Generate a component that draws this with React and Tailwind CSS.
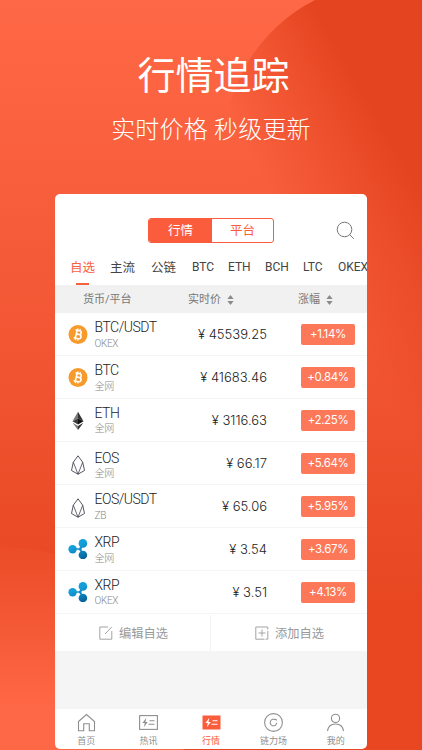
import React from "react";

const coins = [
  { icon: "btc", name: "BTC/USDT", place: "OKEX", price: "45539.25", change: "+1.14%" },
  { icon: "btc", name: "BTC", place: "全网", price: "41683.46", change: "+0.84%" },
  { icon: "eth", name: "ETH", place: "全网", price: "3116.63", change: "+2.25%", tight: true },
  { icon: "eos", name: "EOS", place: "全网", price: "66.17", change: "+5.64%", tight: true, low: true },
  { icon: "eos", name: "EOS/USDT", place: "ZB", price: "65.06", change: "+5.95%" },
  { icon: "xrp", name: "XRP", place: "全网", price: "3.54", change: "+3.67%" },
  { icon: "xrp", name: "XRP", place: "OKEX", price: "3.51", change: "+4.13%", tight: true },
];

const App = () => {
  return (
    <div className="relative flex h-[750px] w-[422px] flex-col items-center overflow-hidden bg-linear-to-b from-[#ff6846] from-0% to-[#e84722] to-80% font-[Roboto,'Noto_Sans_CJK_SC',sans-serif]">
      <Backdrop />

      {/* Headline */}
      <div className="relative h-[194px] w-full text-center text-white">
        <h1 className="mt-[49px] pl-[5px] text-[38px] leading-[54px] font-normal">
          行情追踪
        </h1>
        <p className="mt-3 text-[24px] leading-[30px] font-light tracking-[0.2px]">
          实时价格 秒级更新
        </p>
      </div>

      {/* Phone screen */}
      <div className="relative flex h-[555px] w-[312px] shrink-0 flex-col overflow-hidden rounded-[5px] bg-white">
        <div className="flex h-[55px] shrink-0 items-end">
          <div className="mb-[6px] ml-[93px] flex h-[25px] w-[126px] overflow-hidden rounded-[3px] border border-[#fb5c3b] text-[12.5px] leading-[24px]">
            <span className="w-[63px] bg-[#fb5c3b] text-center text-white">
              行情
            </span>
            <span className="flex-1 text-center text-[#fb5c3b]">平台</span>
          </div>
          <SearchIcon />
        </div>

        <div className="flex h-[36px] shrink-0 pl-[15px] text-[12.5px] leading-[37px] whitespace-nowrap text-[#444]">
          <div className="relative w-10 shrink-0 text-[#f8613f]">
            自选
            <span className="absolute bottom-0 left-[6px] h-[2px] w-[13px] bg-[#f8613f]" />
          </div>
          <span className="w-[41px] shrink-0">主流</span>
          <span className="w-[41px] shrink-0">公链</span>
          <span className="w-[36px] shrink-0 text-[12px]">BTC</span>
          <span className="w-[37px] shrink-0 text-[12px]">ETH</span>
          <span className="w-[38px] shrink-0 text-[12px]">BCH</span>
          <span className="w-[35px] shrink-0 text-[12px]">LTC</span>
          <span className="shrink-0 text-[12px]">OKEX</span>
        </div>

        <div className="flex h-7 shrink-0 items-center bg-[#f1f1f1] pt-[2px] text-[11px] text-[#777]">
          <span className="w-[106px] pl-7">货币/平台</span>
          <span className="flex w-[110px] items-center gap-[6px] pl-[27px]">
            实时价 <SortIcon />
          </span>
          <span className="flex items-center gap-[6px] pl-[27px]">
            涨幅 <SortIcon />
          </span>
        </div>

        {coins.map((coin, i) => (
          <CoinRow key={i} coin={coin} />
        ))}

        <div className="flex h-[37px] shrink-0 pt-px text-[12.25px] text-[#999]">
          <div className="flex w-[156px] items-center gap-[6px] border-r border-[#f3f3f3] pl-[44px]">
            <EditIcon />
            <span className="mt-[2px]">编辑自选</span>
          </div>
          <div className="flex flex-1 items-center gap-[6px] pl-[44px]">
            <AddIcon />
            <span className="mt-[2px]">添加自选</span>
          </div>
        </div>

        <div className="flex-1 bg-[#f5f5f5]" />

        <div className="flex h-[40px] shrink-0 text-[#8f8f8f]">
          <Tab label="首页">
            <path d="M1.500 8.500 9.500 1.500l8 7v9.300h-5.200v-7H6.700v7H1.500z" />
          </Tab>
          <Tab label="热讯">
            <rect x="0.6" y="2.6" width="17.8" height="13.8" />
            <path d="M10.5 7.8h5M9.5 11.3h6" />
            <path d="M7.4 4.800 3.400 10h2.400l-1 4.200L8.800 9H6.400z" fill="currentColor" stroke="none" />
          </Tab>
          <Tab label="行情" active>
            <rect x="0.5" y="2.5" width="18" height="14" fill="#fb5c3b" stroke="none" />
            <path d="M10.5 7.8h5M9.5 11.3h6" stroke="#fff" />
            <path d="M7.4 4.800 3.400 10h2.400l-1 4.200L8.800 9H6.400z" fill="#fff" stroke="none" />
          </Tab>
          <Tab label="链力场">
            <circle cx="9.5" cy="9.5" r="8.9" />
            <path d="M11.4 6.800a3.300 3.300 0 1 0 1.400 3M11.200 5.800l1.600 1.600" />
          </Tab>
          <Tab label="我的">
            <circle cx="9.5" cy="5.4" r="4.1" />
            <path d="M1.500 18c.6-4.500 4-7 8-7s7.400 2.500 8 7" />
          </Tab>
        </div>
      </div>
    </div>
  );
};

const CoinRow = ({ coin }) => {
  return (
    <div className="flex h-[43px] shrink-0 items-center border-b border-[#f5f5f5] pr-3 pl-[13px]">
      <CoinIcon type={coin.icon} />
      <div
        className={`ml-[6.5px] w-[80px] self-start ${coin.low ? "pt-[8px]" : "pt-[6px]"}`}
      >
        <p className="text-[14px] leading-[17px] font-light tracking-[-0.5px] text-[#222]">
          {coin.name}
        </p>
        <p
          className={`text-[10px] leading-[14px] font-light tracking-[-0.3px] text-[#888] ${coin.tight ? "" : "mt-px"}`}
        >
          {coin.place}
        </p>
      </div>
      <p className="mt-px flex-1 text-right font-[Inter,sans-serif] text-[13px] font-light text-[#222]">
        ¥ {coin.price}
      </p>
      <span className="ml-[34px] flex h-[21px] w-[54px] items-center justify-center rounded-[2px] bg-[#fc7858] pt-px font-[Inter,sans-serif] text-[11.5px] tracking-[-0.35px] text-white">
        {coin.change}
      </span>
    </div>
  );
};

const CoinIcon = ({ type }) => {
  if (type === "btc")
    return (
      <svg className="size-5" viewBox="0 0 20 20" fill="none">
        <circle cx="10" cy="10.500" r="9.500" fill="#f79a2c" />
        <g transform="rotate(13 10 10.500) translate(0 .5)" stroke="#fff" strokeWidth="1.600">
          <path d="M6.500 6h4.200c2.800 0 2.800 3.800 0 3.800H8.200V6M8.200 9.800h3c3.100 0 3.100 4.200 0 4.200H6.500M8.200 9v5" />
          <path d="M8.600 4v2M11 4v2M8.600 14v2M11 14v2" strokeWidth="1.200" />
        </g>
      </svg>
    );
  if (type === "eth")
    return (
      <svg className="mt-px size-5" viewBox="0 0 20 20">
        <path d="M10 .8 4.500 10.200 10 7.600z" fill="#777" />
        <path d="M10 .8 15.500 10.200 10 7.600z" fill="#333" />
        <path d="M4.500 10.200 10 7.600v6z" fill="#3a3a3a" />
        <path d="M15.500 10.200 10 7.600v6z" fill="#111" />
        <path d="M4.600 11.700 10 14.900V19z" fill="#777" />
        <path d="M15.400 11.700 10 14.900V19z" fill="#333" />
      </svg>
    );
  if (type === "eos")
    return (
      <svg className="mt-[3px] size-5" viewBox="0 0 20 20" fill="none" stroke="#43434f" strokeWidth="0.900" strokeLinejoin="round">
        <path d="M10 .8 5.300 7.200 3.500 15.500 10 19.200l6.500-3.700-1.800-8.300z" />
        <path d="M5.300 7.200 10 19.200l4.700-12" strokeWidth="0.800" />
      </svg>
    );
  return (
    <svg className="size-5" viewBox="0 0 20 20">
      <defs>
        <linearGradient id="xrp" gradientUnits="userSpaceOnUse" x1="6" y1="2" x2="14" y2="20">
          <stop offset="0.300" stopColor="#149fda" />
          <stop offset="1" stopColor="#07639c" />
        </linearGradient>
      </defs>
      <g fill="url(#xrp)">
        <path d="M5 9.200h6l2.500-3 1.500 1.500c-1.800.9-1.900 4.200 0 5.100L13.500 14l-2.500-3.200H5z" />
        <circle cx="4.600" cy="10.200" r="4.200" />
        <circle cx="14.900" cy="4.400" r="4.300" />
        <circle cx="14.900" cy="16" r="4.300" />
      </g>
    </svg>
  );
};

const Tab = ({ label, active, children }) => {
  return (
    <div
      className={`flex flex-1 flex-col items-center pt-1 ${active ? "text-[#fb5c3b]" : ""}`}
    >
      <svg className="size-[19px] shrink-0" viewBox="0 0 19 19" fill="none" stroke="currentColor" strokeWidth="1.100">
        {children}
      </svg>
      <span className="mt-[3px] text-[9px] leading-[13px]">{label}</span>
    </div>
  );
};

const SearchIcon = () => (
  <svg className="mb-[9px] ml-[62px] size-[19px]" viewBox="0 0 19 19" fill="none" stroke="#777">
    <circle cx="8.500" cy="8.500" r="7.300" />
    <path d="m13.600 13.600 4.200 4.200" />
  </svg>
);

const SortIcon = () => (
  <svg className="h-[10px] w-[7px]" viewBox="0 0 7 10" fill="#8a8a8a">
    <path d="M3.500 0 6.600 4H.4zM3.500 10 6.600 6H.4z" />
  </svg>
);

const EditIcon = () => (
  <svg className="size-[14px]" viewBox="0 0 14 14" fill="none" stroke="#a3a3a3">
    <path d="M9 1H.8v12.200h12V5M6 8l6.800-7" />
  </svg>
);

const AddIcon = () => (
  <svg className="size-[14px]" viewBox="0 0 14 14" fill="none" stroke="#a3a3a3">
    <path d="M9.500 13.200H.8V1h12v2.500M12.800 5v8.200H10.500M3.500 7h7M7 3.500v7" />
  </svg>
);

const Backdrop = () => (
  <svg className="absolute inset-0 h-full w-full" viewBox="0 0 422 750">
    <defs>
      <linearGradient id="topCircle" gradientUnits="userSpaceOnUse" x1="345" y1="60" x2="232" y2="125">
        <stop offset="0" stopColor="#e54420" />
        <stop offset="1" stopColor="#e54420" stopOpacity="0" />
      </linearGradient>
      <linearGradient id="bottomCircle" x1="0" y1="0" x2="0" y2="1">
        <stop offset="0" stopColor="#ff6846" stopOpacity="0.100" />
        <stop offset="0.450" stopColor="#ff6846" />
      </linearGradient>
    </defs>
    <path d="M315 0A166 166 0 0 0 224 148V500H422V0z" fill="url(#topCircle)" />
    <circle cx="5" cy="727" r="180" fill="url(#bottomCircle)" />
  </svg>
);

export default App;
